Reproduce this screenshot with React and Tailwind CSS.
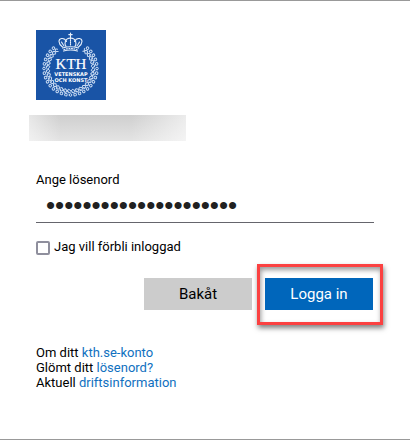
import React, { useState } from 'react';

// Positions round the wreath, as angles clockwise from the top
const wreathAngles = Array.from({ length: 29 }, (_, i) => 40 + i * 10).filter((a) => a <= 320);

function Logo() {
  return (
    <svg viewBox="0 0 70 70" className="block size-[70px]" role="img" aria-label="KTH">
      <rect width="70" height="70" fill="#1954a6" />
      <g fill="none" stroke="#c9dbf2" strokeWidth="1" strokeLinecap="round">
        {wreathAngles.map((a) => (
          <g key={a} transform={`rotate(${a} 34.5 38.5)`}>
            <circle cx="34.5" cy="12" r="1.3" />
            <path d="M32.3 14.2q1.2 2.2 2.4 0.6t2.2 0.6" />
            <path d="M32.8 17.4l1.2-1.4 2 1.6" />
          </g>
        ))}
      </g>
      {/* Crown */}
      <g fill="none" stroke="#e6effa" strokeWidth="1.1" strokeLinecap="round">
        <path d="M34.5 3v4.5M32.8 4.6h3.4" />
        <path d="M26.5 17c-5-4-4-8-1-8.5 3-.5 4 1 5 3M42.5 17c5-4 4-8 1-8.5-3-.5-4 1-5 3" />
        <path d="M30 16.5c-2-4-1-8 4.5-8.5 5.5.5 6.5 4.5 4.5 8.5" />
        <path d="M34.5 8v8" strokeDasharray="1 1" />
        <path d="M25.5 12l2.5 4M43.5 12l-2.5 4" strokeDasharray="1 1" />
        <path d="M26.5 18q8-2.5 16 0M27.5 21q7-2 14 0" />
        <path d="M28 19.5q6.5-2 13 0" strokeDasharray="1 1.5" />
      </g>
      <g fill="#fff" textAnchor="middle">
        <text x="35" y="39" fontFamily="'Liberation Serif', serif" fontSize="15" stroke="#fff" strokeWidth="0.2">KTH</text>
        <text x="35" y="46" fontFamily="'DejaVu Sans', sans-serif" fontSize="5" fontWeight="700">VETENSKAP</text>
        <text x="35" y="52" fontFamily="'DejaVu Sans', sans-serif" fontSize="5" fontWeight="700">OCH KONST</text>
      </g>
    </svg>
  );
}

function App() {
  const [password, setPassword] = useState('abcdefghijklmnopqrstu');
  const [remember, setRemember] = useState(false);

  return (
    <main className="min-h-screen border-y border-[#999999] bg-white px-9 pt-[29px] pb-12 font-['Roboto',sans-serif] text-[13px] leading-[15px] text-black">
      <Logo />

      {/* Blurred out account name */}
      <div className="mt-[15px] -ml-[7px] h-[26px] w-[157px] bg-linear-to-b from-[#cfcfcf] to-[#e4e4e4]">
        <div className="h-full bg-linear-to-r from-white/50 to-transparent to-20%">
          <div className="h-full bg-linear-to-l from-white/60 to-transparent to-35%" />
        </div>
      </div>

      <form onSubmit={(e) => e.preventDefault()}>
        <label htmlFor="password" className="mt-[31px] block">Ange lösenord</label>
        <input
          id="password"
          type="password"
          value={password}
          onChange={(e) => setPassword(e.target.value)}
          className="block h-9 w-full border-b border-[#65656c] px-[10px] pt-[2px] font-['Liberation_Sans',sans-serif] text-[26px] text-[#212121] outline-none"
        />

        <label className="mt-[15px] flex items-center gap-1">
          <input
            type="checkbox"
            checked={remember}
            onChange={(e) => setRemember(e.target.checked)}
            className="mt-[3px] size-[14px] appearance-none rounded-xs border-2 border-[#8f8f9d] bg-white checked:bg-[#0066bb]"
          />
          Jag vill förbli inloggad
        </label>

        <div className="mt-[9px] -mr-[9px] flex items-start justify-end gap-[5px]">
          <button type="button" className="mt-[14px] h-8 w-[108px] bg-[#cccccc] text-[15px]">Bakåt</button>
          <div className="border-[3px] border-[#fb4141] pt-[11px] pr-[7px] pb-3 pl-[5px] shadow-[1px_3px_5px_rgba(0,0,0,0.5),inset_1px_3px_5px_rgba(0,0,0,0.4)]">
            <button type="submit" className="block h-8 w-[108px] bg-[#0066bb] text-[15px] text-white">Logga in</button>
          </div>
        </div>
      </form>

      <div className="mt-5">
        <p>Om ditt <a href="#konto" className="text-[#1070c0]">kth.se-konto</a></p>
        <p>Glömt ditt <a href="#losenord" className="text-[#1070c0]">lösenord?</a></p>
        <p>Aktuell <a href="#drift" className="text-[#1070c0]">driftsinformation</a></p>
      </div>
    </main>
  );
}

export default App;
